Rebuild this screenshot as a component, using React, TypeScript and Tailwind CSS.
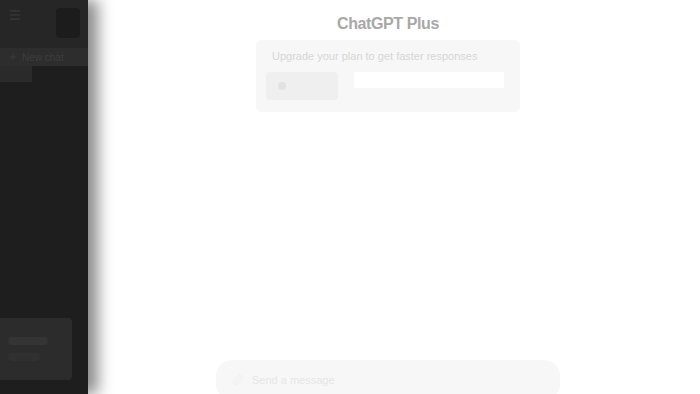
import { Plus, Menu, Paperclip } from "lucide-react";

export default function App() {
  return (
    <div
      className="flex h-[394px] w-[700px] overflow-hidden bg-white"
      style={{ fontFamily: '"Liberation Sans", Arial, sans-serif' }}
    >
      {/* sidebar */}
      <aside className="relative z-10 flex w-[88px] shrink-0 flex-col bg-[#1e1e1e] shadow-[10px_0_14px_rgba(0,0,0,0.45)]">
        <div className="flex h-[48px] items-start justify-between bg-[#262626] px-2 pt-2">
          <Menu size={14} className="text-[#3a3a3a]" />
          <div className="h-[30px] w-[24px] rounded bg-[#1c1c1c]" />
        </div>
        <div className="flex h-[18px] items-center gap-1 bg-[#2d2d2d] px-2 text-[10px] text-[#3d3d3d]">
          <Plus size={10} />
          <span>New chat</span>
        </div>
        <div className="h-[16px] w-[32px] bg-[#2a2a2a]" />
        <div className="flex-1" />
        <div className="mb-[14px] flex h-[62px] w-[72px] flex-col justify-center gap-2 rounded-r bg-[#2c2c2c] px-2">
          <div className="h-2 w-10 rounded bg-[#343434]" />
          <div className="h-2 w-8 rounded bg-[#303030]" />
        </div>
      </aside>

      {/* main */}
      <main className="flex flex-1 flex-col items-center pr-[12px]">
        <h1 className="mt-[12px] text-[16px] font-semibold tracking-tight text-[#a8a8a8]">
          ChatGPT Plus
        </h1>
        <div className="mt-[4px] flex w-[264px] flex-col gap-2 rounded-md bg-[#f7f7f7] pb-[12px] pl-[10px] pr-[16px] pt-[8px]">
          <p className="truncate pl-[6px] text-[11px] leading-[16px] text-[#d6d6d6]">
            Upgrade your plan to get faster responses
          </p>
          <div className="flex items-center gap-4">
            <div className="flex h-[28px] w-[72px] items-center rounded bg-[#efefef] px-3">
              <div className="h-2 w-2 rounded-sm bg-[#e2e2e2]" />
            </div>
            <div className="h-[16px] flex-1 self-start bg-white" />
          </div>
        </div>

        <div className="flex-1" />

        <div className="mb-[-6px] flex h-[40px] w-[344px] items-center gap-2 rounded-2xl bg-[#f7f7f7] px-[16px]">
          <Paperclip size={12} className="text-[#f0f0f0]" />
          <span className="text-[11px] text-[#e6e6e6]">Send a message</span>
        </div>
      </main>
    </div>
  );
}
